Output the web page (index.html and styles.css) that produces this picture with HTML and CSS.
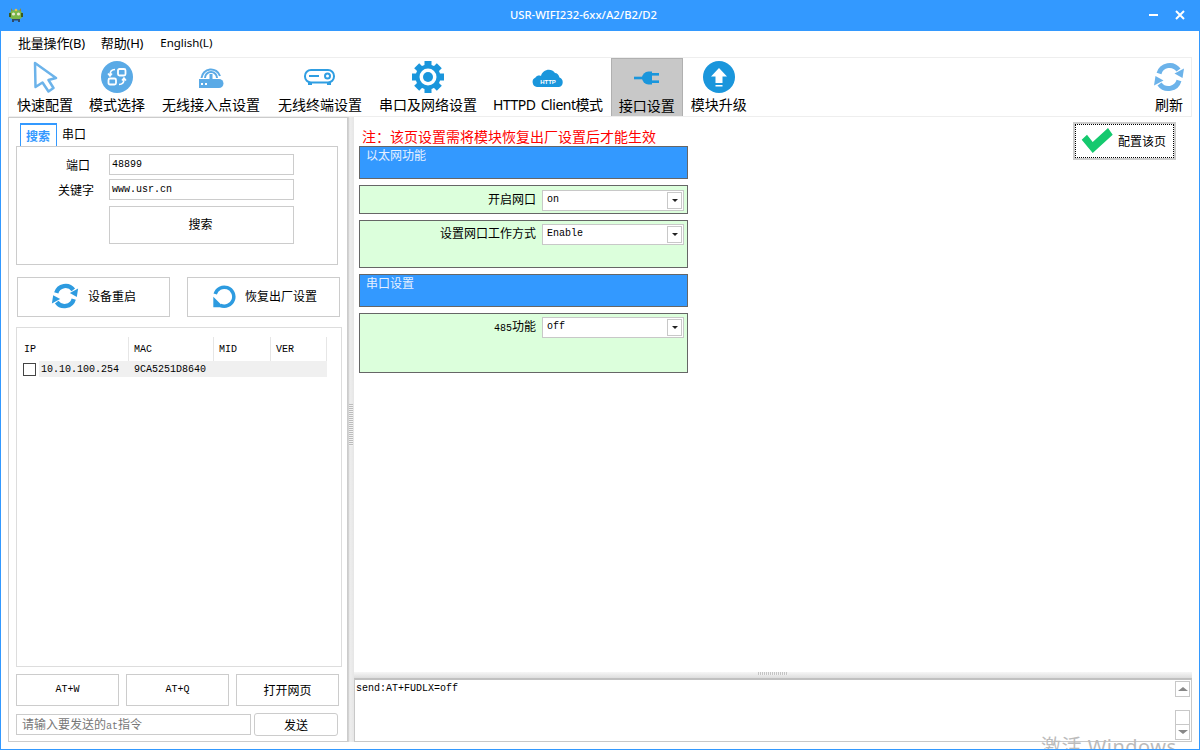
FILE: index.html
```html
<!DOCTYPE html>
<html lang="zh">
<head>
<meta charset="utf-8">
<title>USR-WIFI232-6xx/A2/B2/D2</title>
<link rel="stylesheet" href="styles.css">
</head>
<body>
<svg class="defs" width="0" height="0" aria-hidden="true">
  <symbol id="refresh" viewBox="0 0 32 32">
    <path d="M6 12.5A11 11 0 0 1 25.5 9" fill="none" stroke="currentColor" stroke-width="5"/>
    <path d="M26 19.5A11 11 0 0 1 6.5 23" fill="none" stroke="currentColor" stroke-width="5"/>
    <path d="M31 7.5L29.5 17L21.5 12.5Z" fill="currentColor"/>
    <path d="M1 24.5L2.5 15L10.5 19.5Z" fill="currentColor"/>
  </symbol>
</svg>
<div class="window">
  <header class="titlebar">
    <svg class="logo" viewBox="0 0 16 16">
      <path d="M3 1L5 4H11L13 1L13 5H3Z" fill="#8a8a3a"/>
      <ellipse cx="8" cy="8" rx="7" ry="5" fill="#7ab648"/>
      <rect x="1" y="6" width="2" height="4" fill="#3d5a1e"/>
      <rect x="13" y="6" width="2" height="4" fill="#3d5a1e"/>
      <circle cx="5.5" cy="7" r="1.6" fill="#e8e8d0"/>
      <circle cx="10.500" cy="7" r="1.6" fill="#e8e8d0"/>
      <path d="M4 12H12V15H10V13.500H6V15H4Z" fill="#2f4a6a"/>
      <circle cx="8" cy="3" r="1.300" fill="#e8c040"/>
    </svg>
    <div class="title">USR-WIFI232-6xx/A2/B2/D2</div>
    <svg class="winbtn winbtn-min" viewBox="0 0 10 10"><rect x="0" y="4" width="9" height="2" fill="#fff"/></svg>
    <svg class="winbtn" viewBox="0 0 10 10"><path d="M1 1L9 9M9 1L1 9" stroke="#fff" stroke-width="2" fill="none"/></svg>
  </header>

  <nav class="menu">
    <span>批量操作(B)</span>
    <span>帮助(H)</span>
    <span class="menu-en">English(L)</span>
  </nav>

  <div class="toolbar">
    <div class="tool">
      <svg class="ico" viewBox="0 0 32 32"><path d="M6 2L27 17L19.500 19L24.500 27L19.500 30.500L13.500 21.500L6.500 26Z" fill="#fff" stroke="#6cb3ea" stroke-width="2.500" stroke-linejoin="round"/></svg>
      <span>快速配置</span>
    </div>
    <div class="tool">
      <svg class="ico" viewBox="0 0 32 32">
        <circle cx="16" cy="16" r="16" fill="#5aaae6"/>
        <rect x="17" y="8" width="7.500" height="6.500" rx="1.500" fill="none" stroke="#fff" stroke-width="1.800"/>
        <rect x="7.500" y="17.500" width="7.500" height="6" rx="1.500" fill="none" stroke="#fff" stroke-width="1.800"/>
        <path d="M14 8.500C11 8.500 9 10 9 14M7 12.500L9 15L11 12.500M18 23.500C21 23.500 23 22 23 18M21 19.500L23 17L25 19.500" fill="none" stroke="#fff" stroke-width="1.500"/>
      </svg>
      <span>模式选择</span>
    </div>
    <div class="tool tool-a">
      <svg class="ico" viewBox="0 0 32 32">
        <path d="M4 18H24A4.500 4.500 0 0 1 24 27H4Z" fill="#5aaae6"/>
        <rect x="6" y="22" width="2" height="2" fill="#fff"/>
        <rect x="10" y="22" width="2" height="2" fill="#fff"/>
        <path d="M10 17A6 6 0 0 1 22 17M6.500 17A9.500 9.500 0 0 1 25 15" fill="none" stroke="#5aaae6" stroke-width="2"/>
        <rect x="14.500" y="13" width="3" height="5" fill="#5aaae6"/>
      </svg>
      <span>无线接入点设置</span>
    </div>
    <div class="tool tool-b">
      <svg class="ico" viewBox="0 0 32 32">
        <rect x="1" y="9" width="29" height="12.500" rx="6" fill="none" stroke="#2f9ee2" stroke-width="2"/>
        <circle cx="23.500" cy="15" r="2.500" fill="none" stroke="#2f9ee2" stroke-width="2"/>
        <rect x="5" y="14" width="10" height="2" fill="#2f9ee2"/>
        <rect x="4" y="21" width="4" height="3" fill="#2f9ee2"/>
        <rect x="23" y="21" width="4" height="3" fill="#2f9ee2"/>
      </svg>
      <span>无线终端设置</span>
    </div>
    <div class="tool">
      <svg class="ico" viewBox="0 0 32 32">
        <g fill="#1a96dc">
          <rect x="12.500" y="0" width="7" height="32"/>
          <rect x="12.500" y="0" width="7" height="32" transform="rotate(45 16 16)"/>
          <rect x="12.500" y="0" width="7" height="32" transform="rotate(90 16 16)"/>
          <rect x="12.500" y="0" width="7" height="32" transform="rotate(135 16 16)"/>
          <circle cx="16" cy="16" r="12.500"/>
        </g>
        <circle cx="16" cy="16" r="8.500" fill="#fff"/>
        <circle cx="16" cy="16" r="5" fill="#1a96dc"/>
      </svg>
      <span>串口及网络设置</span>
    </div>
    <div class="tool">
      <svg class="ico" viewBox="0 0 32 32">
        <path d="M5 26A5 5 0 0 1 3.500 16.500C5 14.500 7 14 9 15C10 9 19 6 23 12C25 12 27 14 27.500 16.500A5 5 0 0 1 27 26Z" fill="#1a96dc"/>
        <text x="16" y="23" class="cloud-text">HTTP</text>
      </svg>
      <span class="spaced">HTTPD Client模式</span>
    </div>
    <div class="tool tool-active">
      <svg class="ico" viewBox="0 0 32 32">
        <rect x="3" y="14.700" width="11" height="2.600" fill="#1a96dc"/>
        <path d="M21 9.500V22.500H17.500A6.500 6.500 0 0 1 17.500 9.500Z" fill="#1a96dc"/>
        <rect x="21" y="11" width="7" height="2.600" fill="#1a96dc"/>
        <rect x="21" y="18.400" width="7" height="2.600" fill="#1a96dc"/>
      </svg>
      <span>接口设置</span>
    </div>
    <div class="tool">
      <svg class="ico" viewBox="0 0 32 32">
        <circle cx="16" cy="16" r="16" fill="#1a96dc"/>
        <path d="M16 7L24 15.500H19.500V22H12.500V15.500H8Z" fill="#fff"/>
        <rect x="12.500" y="24" width="7" height="1.500" fill="#fff"/>
      </svg>
      <span>模块升级</span>
    </div>
    <div class="tool tool-end">
      <svg class="ico ico-refresh"><use href="#refresh"/></svg>
      <span>刷新</span>
    </div>
  </div>

  <main class="main">
    <aside class="left">
      <div class="tabs">
        <span class="tab tab-on">搜索</span>
        <span class="tab">串口</span>
      </div>
      <section class="search">
        <div class="search-row">
          <label class="search-label">端口</label>
          <div class="field mono">48899</div>
        </div>
        <div class="search-row">
          <label class="search-label">关键字</label>
          <div class="field mono">www.usr.cn</div>
        </div>
        <div class="search-row">
          <span class="search-label"></span>
          <div class="btn btn-search">搜索</div>
        </div>
      </section>

      <div class="actions">
        <div class="btn btn-action">
          <svg class="ico-sm ico-restart"><use href="#refresh"/></svg>
          <span>设备重启</span>
        </div>
        <div class="btn btn-action">
          <svg class="ico-sm" viewBox="0 0 26 26">
            <path d="M5.200 11A9.500 9.500 0 1 1 10.500 22.400" fill="none" stroke="#2d9be0" stroke-width="3.500"/>
            <path d="M3.300 13.800V24.300H13.800Z" fill="#2d9be0"/>
          </svg>
          <span>恢复出厂设置</span>
        </div>
      </div>

      <section class="devices">
        <div class="dev-head mono">
          <span class="col col-ip">IP</span>
          <span class="col col-mac">MAC</span>
          <span class="col col-mid">MID</span>
          <span class="col col-ver">VER</span>
        </div>
        <div class="dev-row mono">
          <span class="check"></span>
          <span class="dev-cells">
            <span class="cell-ip">10.10.100.254</span>
            <span class="cell-mac">9CA5251D8640</span>
          </span>
        </div>
      </section>

      <div class="at-row">
        <div class="btn btn-at mono">AT+W</div>
        <div class="btn btn-at mono">AT+Q</div>
        <div class="btn btn-at">打开网页</div>
      </div>
      <div class="send-row">
        <div class="field send-input">请输入要发送的<span class="mono">at</span>指令</div>
        <div class="btn btn-send">发送</div>
      </div>
    </aside>

    <div class="vsplit"><span class="vgrip"></span></div>

    <div class="right">
      <div class="config">
        <div class="groups">
          <div class="note">注：该页设置需将模块恢复出厂设置后才能生效</div>
          <div class="grp grp-head">以太网功能</div>
          <div class="grp grp-opt grp-h28">
            <span class="opt-label">开启网口</span>
            <div class="select mono"><span>on</span><span class="select-btn"></span></div>
          </div>
          <div class="grp grp-opt grp-h47">
            <span class="opt-label">设置网口工作方式</span>
            <div class="select mono"><span>Enable</span><span class="select-btn"></span></div>
          </div>
          <div class="grp grp-head">串口设置</div>
          <div class="grp grp-opt grp-h59">
            <span class="opt-label"><span class="mono">485</span>功能</span>
            <div class="select mono"><span>off</span><span class="select-btn"></span></div>
          </div>
        </div>
        <div class="apply">
          <div class="apply-inner">
            <svg class="check-ico" viewBox="0 0 32 26"><path d="M0.700 11.700L11.700 25L31.700 6.700L27 0L11.700 14L6 6.700Z" fill="#14c96e"/></svg>
            <span>配置该页</span>
          </div>
        </div>
      </div>
      <div class="hsplit"><span class="hgrip"></span></div>
      <div class="console">
        <div class="console-text mono">send:AT+FUDLX=off</div>
        <div class="scroll">
          <span class="scroll-btn"><i class="tri-up"></i></span>
          <span class="scroll-track"><span class="scroll-thumb"></span></span>
          <span class="scroll-btn"><i class="tri-down"></i></span>
        </div>
      </div>
    </div>
  </main>
  <div class="watermark">激活 Windows</div>
</div>
</body>
</html>
```
FILE: styles.css
```css
* { box-sizing: border-box; }
html, body { margin: 0; padding: 0; }
body { font: 12px "Noto Sans", "Noto Sans CJK SC", sans-serif; color: #000; background: #fff; }
.defs { position: absolute; }
.mono { font-family: "Liberation Mono", "Noto Sans CJK SC", monospace; font-size: 10px; }

.window { position: relative; width: 1200px; height: 750px; border: 1px solid #3399ff; background: #fff; display: flex; flex-direction: column; overflow: hidden; }

.titlebar { flex: none; height: 30px; background: #3399ff; display: flex; align-items: center; padding: 0 14px 0 7px; color: #fff; }
.logo { width: 16px; height: 16px; flex: none; margin-top: -2px; }
.title { flex: 1; text-align: center; font-size: 11.3px; font-weight: 500; padding-left: 10px; margin-top: -3px; }
.winbtn { width: 10px; height: 10px; flex: none; margin-left: 16px; margin-top: -2px; }
.winbtn-min { margin-top: -2px; }

.menu { flex: none; height: 26px; display: flex; align-items: center; gap: 16px; padding: 0 0 4px 17px; font-size: 13px; }
.menu span { letter-spacing: -.2px; }
.menu .menu-en { font-size: 11.5px; letter-spacing: 0; margin-left: 1px; }

.toolbar { flex: none; height: 60px; margin: 0 7px; border: 1px solid #eee; display: flex; font-size: 14px; }
.tool { display: flex; flex-direction: column; align-items: center; padding: 3px 8px 0; height: 58px; line-height: 19px; white-space: nowrap; }
.tool-a { padding-left: 9px; padding-right: 9px; }
.tool-b { padding-left: 9px; padding-right: 9px; }
.tool-active { background: #c8c8c8; border: 1px solid #b0b0b0; border-width: 1px 1px 0; padding-left: 7px; padding-right: 7px; }
.tool-end { margin-left: auto; padding-right: 6px; }
.spaced { word-spacing: 2px; letter-spacing: -.47px; }
.ico { width: 32px; height: 32px; flex: none; margin-bottom: 2px; }
.ico-refresh { color: #6cb3ea; }
.cloud-text { font: bold 6px "Liberation Sans", sans-serif; fill: #fff; text-anchor: middle; }

.main { flex: 1; min-height: 0; display: flex; margin: 0 7px 7px; }

.left { width: 340px; flex: none; border: 1px solid #ccc; padding: 5px 5px 5px 7px; display: flex; flex-direction: column; }
.tabs { display: flex; height: 23px; flex: none; padding-left: 4px; }
.tab { padding: 0 5px; line-height: 23px; }
.tab-on { color: #3399ff; font-weight: 700; border: 1px solid #3399ff; border-bottom: 0; width: 37px; padding: 0 5px; background: #fff; border-width: 2px 1px 0; }
.search { flex: none; height: 119px; width: 322px; border: 1px solid #ccc; padding: 7px 0 0; display: flex; flex-direction: column; gap: 4px; }
.search-row { display: flex; align-items: center; }
.search-label { width: 92px; padding-right: 19px; text-align: right; flex: none; }
.search-row:nth-child(2) .search-label { padding-right: 15px; }
.field { border: 1px solid #ccc; background: #fff; height: 21px; line-height: 17px; padding: 1px 2px; }
.search .field { width: 185px; }
.btn { border: 1px solid #ccc; background: #fff; display: flex; align-items: center; justify-content: center; }
.btn-search { width: 185px; height: 38px; margin-top: 2px; padding: 0 2px 2px 0; }

.actions { flex: none; display: flex; gap: 17px; margin: 12px 0 10px 1px; }
.btn-action { width: 153px; height: 40px; gap: 9px; padding-bottom: 2px; }
.ico-sm { width: 26px; height: 26px; flex: none; }
.ico-restart { width: 28px; height: 28px; color: #2d9be0; }

.devices { flex: 1; min-height: 0; width: 326px; border: 1px solid #ddd; padding-top: 9px; }
.dev-head { display: flex; height: 24px; line-height: 26px; }
.col { border-right: 1px solid #e6e6e6; height: 24px; padding-left: 5px; }
.col-ip { width: 112px; padding-left: 7px; }
.col-mac { width: 85px; }
.col-mid { width: 57px; }
.col-ver { width: 56px; }
.dev-row { display: flex; height: 16px; align-items: center; padding-left: 6px; }
.check { width: 13px; height: 13px; border: 1px solid #444; flex: none; margin-right: 3px; }
.dev-cells { flex: none; width: 288px; height: 16px; line-height: 17px; background: #f0f0f0; display: flex; }
.cell-ip { width: 95px; padding-left: 2px; }

.at-row { flex: none; display: flex; gap: 7px; margin-top: 7px; }
.btn-at { width: 103px; height: 32px; padding-bottom: 1px; }
.send-row { flex: none; display: flex; margin-top: 7px; gap: 3px; align-items: center; }
.send-input { width: 235px; color: #777; padding-left: 5px; line-height: 17px; }
.btn-send { width: 84px; height: 23px; border-radius: 3px; }

.vsplit { width: 6px; flex: none; background: linear-gradient(to right, #c8c8c8, #eee 30%, #e6e6e6); display: flex; align-items: center; }
.vgrip { display: block; width: 4px; height: 42px; margin: -10px 0 0 1px; background: repeating-linear-gradient(to bottom, #bbb 0 1px, #f2f2f2 1px 2px); }

.right { flex: 1; min-width: 0; display: flex; flex-direction: column; }
.config { flex: 1; min-height: 0; display: flex; justify-content: space-between; padding: 0 16px 0 5px; }
.groups { width: 329px; display: flex; flex-direction: column; gap: 6px; }
.note { height: 29px; margin-bottom: -6px; padding: 10px 0 0 3px; line-height: 19px; color: #f00; font-size: 14px; white-space: nowrap; }
.grp { border: 1px solid #666; }
.grp-head { height: 33px; background: #3399ff; color: #e6f0ff; padding: 0 0 0 6px; line-height: 17px; }
.grp-opt { background: #dcffdc; display: flex; align-items: flex-start; padding-top: 3px; }
.grp-h28 { height: 29px; padding-top: 4px; }
.grp-h47 { height: 48px; }
.grp-h59 { height: 60px; }
.opt-label { width: 176px; text-align: right; flex: none; line-height: 20px; }
.select { width: 142px; height: 21px; margin-left: 6px; background: #fff; border: 1px solid #c8c8c8; display: flex; justify-content: space-between; align-items: center; padding: 0 1px 0 4px; line-height: 15px; }
.select > span:first-child { margin-top: -2px; }
.select-btn { width: 15px; height: 17px; border: 1px solid #c8c8c8; position: relative; }
.select-btn::after { content: ""; position: absolute; left: 4px; top: 6px; border: 3px solid transparent; border-top: 3px solid #222; border-bottom: 0; }

.apply { width: 103px; height: 38px; margin-top: 5px; border: 2px solid #ccc; }
.apply-inner { height: 100%; border: 1px dotted #000; display: flex; align-items: center; gap: 5px; padding-left: 5px; }
.check-ico { width: 32px; height: 26px; flex: none; }

.hsplit { flex: none; height: 6px; background: linear-gradient(to bottom, #f6f6f6, #ddd); display: flex; justify-content: center; }
.hgrip { display: block; width: 30px; height: 3px; background: repeating-linear-gradient(to right, #c4c4c4 0 1px, #f2f2f2 1px 2px); }

.console { flex: none; height: 64px; border: 1px solid #c8c8c8; border-top: 2px solid #c0c0c0; display: flex; justify-content: space-between; }
.console-text { padding: 3px 0 0 1px; line-height: 12px; }
.scroll { width: 15px; margin: 1px 1px 1px 0; display: flex; flex-direction: column; }
.scroll-btn { flex: none; height: 16px; border: 1px solid #c8c8c8; display: flex; align-items: center; justify-content: center; }
.scroll-track { flex: 1; display: flex; align-items: flex-end; }
.scroll-thumb { display: block; width: 15px; height: 14px; border: 1px solid #c8c8c8; border-bottom: 0; }
.tri-up { border: 4px solid transparent; border-top: 0; border-bottom: 4px solid #888; border-left-width: 5px; border-right-width: 5px; }
.tri-down { border: 4px solid transparent; border-bottom: 0; border-top: 4px solid #888; border-left-width: 5px; border-right-width: 5px; }

.watermark { position: absolute; left: 1040px; top: 734px; font-size: 20px; line-height: 24px; color: #bbb; white-space: nowrap; letter-spacing: .5px; }
```
